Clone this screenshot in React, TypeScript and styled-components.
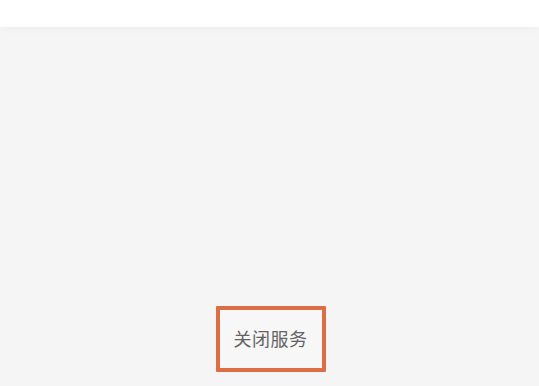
import React from 'react';
import styled, { createGlobalStyle } from 'styled-components';

const GlobalStyle = createGlobalStyle`
  html, body {
    margin: 0;
    padding: 0;
    background: #f5f5f5;
  }
  body {
    font-family: "Noto Sans CJK SC", "Noto Sans", sans-serif;
  }
`;

const Page = styled.div`
  width: 539px;
  height: 386px;
  display: flex;
  flex-direction: column;
  background: #f5f5f5;
  overflow: hidden;
`;

const Header = styled.div`
  height: 27px;
  flex-shrink: 0;
  background: #ffffff;
  box-shadow: 0 2px 8px rgba(0, 0, 0, 0.03);
`;

const Body = styled.div`
  flex: 1;
  display: flex;
  flex-direction: column;
  align-items: center;
  justify-content: flex-end;
  padding-bottom: 14px;
`;

const CloseButton = styled.button`
  box-sizing: border-box;
  width: 110px;
  height: 66px;
  margin-left: 2px;
  display: flex;
  align-items: center;
  justify-content: center;
  background: #f7f7f7;
  border: 4px solid #dc6d44;
  border-radius: 1px;
  font-family: "Noto Sans CJK SC", "Noto Sans", sans-serif;
  font-size: 18px;
  letter-spacing: 0.5px;
  color: #636363;
  padding: 0 0 2px;
  cursor: pointer;
`;

export default function App() {
  return (
    <>
      <GlobalStyle />
      <Page>
        <Header />
        <Body>
          <CloseButton>关闭服务</CloseButton>
        </Body>
      </Page>
    </>
  );
}
